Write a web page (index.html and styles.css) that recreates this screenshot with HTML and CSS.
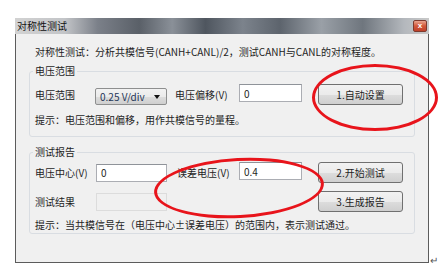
FILE: index.html
```html
<!DOCTYPE html>
<html lang="zh-CN">

<head>
  <meta charset="UTF-8" />
  <meta name="viewport" content="width=device-width, initial-scale=1.0" />
  <title>对称性测试</title>
  <link rel="stylesheet" href="styles.css">
</head>

<body>
  <div class="page">
    <div class="window">
      <div class="titlebar">
        <span class="title">对称性测试</span>
        <span class="close">x</span>
      </div>

      <div class="client">
        <p class="intro">对称性测试：分析共模信号(CANH+CANL)/2，测试CANH与CANL的对称程度。</p>

        <fieldset class="group group-range">
          <legend>电压范围</legend>
          <div class="row">
            <span class="label label-first">电压范围</span>
            <div class="combo">
              <span>0.25 V/div</span>
              <span class="arrow"></span>
            </div>
            <span class="label label-second">电压偏移(V)</span>
            <input class="edit edit-offset" type="text" value="0">
            <button class="btn">1.自动设置</button>
          </div>
          <p class="hint">提示：电压范围和偏移，用作共模信号的量程。</p>
        </fieldset>

        <fieldset class="group group-report">
          <legend>测试报告</legend>
          <div class="row">
            <span class="label label-first">电压中心(V)</span>
            <input class="edit edit-first" type="text" value="0">
            <span class="label label-second">误差电压(V)</span>
            <input class="edit edit-offset" type="text" value="0.4">
            <button class="btn">2.开始测试</button>
          </div>
          <div class="row row-result">
            <span class="label label-first">测试结果</span>
            <input class="edit edit-first" type="text" disabled>
            <span class="spacer"></span>
            <button class="btn">3.生成报告</button>
          </div>
          <p class="hint hint-report">提示：当共模信号在（电压中心±误差电压）的范围内，表示测试通过。</p>
        </fieldset>
      </div>
    </div>

    <span class="return-mark">↵</span>

    <!-- red marks drawn over the dialog -->
    <div class="ring ring-auto"></div>
    <div class="ring ring-error"></div>
  </div>
</body>

</html>
```

FILE: styles.css
```css
body,
div,
fieldset,
p {
  margin: 0;
  padding: 0;
}

body {
  background: #ffffff;
  font-family: "Noto Sans CJK SC", "Liberation Sans", sans-serif;
  font-size: 10px;
  color: #1e1e1e;
}

.page {
  position: relative;
  width: 442px;
  height: 273px;
  overflow: hidden;
  padding-top: 18px;
  box-sizing: border-box;
}

.window {
  margin-left: 15px;
  width: 414px;
  height: 245px;
  border: 1px solid #5c5c5c;
  border-top: 0;
  box-sizing: border-box;
  background: #f0f0f0;
  display: flex;
  flex-direction: column;
}

.titlebar {
  height: 16px;
  margin: 0 -1px;
  display: flex;
  align-items: center;
  justify-content: space-between;
  background: linear-gradient(90deg, #d2d2d2 0%, #c3c5c8 12%, #7b8089 20%, #5a6068 30%, #8a9098 38%, #4f565f 46%, #7c838c 55%, #5d646d 64%, #9aa0a7 74%, #6f767e 84%, #b4b8bd 94%, #c9c9c9 100%);
}

.title {
  padding-left: 2px;
  font-size: 10px;
  line-height: 16px;
  color: #111;
}

.close {
  width: 14px;
  height: 12px;
  margin-right: 2px;
  border: 1px solid #7d3a2e;
  border-radius: 2px;
  box-sizing: border-box;
  background: linear-gradient(#e9a48f, #d2583a 50%, #c0402a);
  color: #fff;
  font-family: "Liberation Sans", sans-serif;
  font-size: 8px;
  font-weight: bold;
  line-height: 10px;
  text-align: center;
}

.client {
  flex: 1;
  padding: 11px 13px 0 13px;
}

.intro {
  margin-left: 6px;
  line-height: 14px;
}

.group {
  margin: 5px 0 0 0;
  padding: 6px 5px 9px 5px;
  border: 1px solid #d9dde2;
  border-radius: 3px;
  min-width: 0;
}

.group legend {
  padding: 0 2px;
  margin-left: -2px;
  line-height: 14px;
}

.group-report {
  margin-top: 8px;
  padding-top: 3px;
  padding-bottom: 1px;
}

.row {
  display: flex;
  align-items: center;
  height: 21px;
}

.row-result {
  margin-top: 8px;
}

.label {
  line-height: 14px;
  white-space: nowrap;
}

.label-first {
  width: 60px;
}

.label-second {
  width: 64px;
  margin-left: 8px;
}

.group-report .label-second {
  margin-left: 10px;
  width: 62px;
}

.combo {
  width: 72px;
  height: 17px;
  margin-top: 4px;
  display: flex;
  align-items: center;
  justify-content: space-between;
  padding: 0 6px 0 4px;
  border: 1px solid #8e8f8f;
  border-radius: 2px;
  box-sizing: border-box;
  background: linear-gradient(#f2f2f2, #ebebeb 50%, #dddddd 51%, #cfcfcf);
  color: #1f3657;
}

.arrow {
  width: 0;
  height: 0;
  border-left: 3px solid transparent;
  border-right: 3px solid transparent;
  border-top: 4px solid #111;
}

.edit {
  height: 18px;
  margin: 0;
  padding: 0 4px;
  border: 1px solid #abadb3;
  border-top-color: #8f9399;
  box-sizing: border-box;
  background: #fff;
  font-family: inherit;
  font-size: 10px;
  color: #1e1e1e;
  align-self: flex-start;
}

.edit-first {
  width: 71px;
  margin-left: 1px;
  align-self: center;
}

.edit-offset {
  width: 63px;
}

.edit:disabled {
  background: #f0f0f0;
  border-color: #dcdcdc;
}

.spacer {
  width: 135px;
}

.btn {
  width: 85px;
  height: 21px;
  margin-left: 16px;
  padding: 0;
  border: 1px solid #707070;
  border-radius: 3px;
  background: linear-gradient(#f2f2f2, #ebebeb 50%, #dddddd 51%, #cfcfcf);
  font-family: inherit;
  font-size: 10px;
  color: #1e1e1e;
}

.hint {
  margin: 8px 0 0 0;
  line-height: 14px;
}

.hint-report {
  margin-top: 6px;
}

.return-mark {
  position: absolute;
  left: 430px;
  top: 252px;
  font-size: 10px;
  color: #555;
}

.ring {
  position: absolute;
  border: 3px solid #e8141b;
  border-radius: 50%;
  box-sizing: border-box;
}

.ring-auto {
  left: 312px;
  top: 64px;
  width: 126px;
  height: 67px;
}

.ring-error {
  left: 154px;
  top: 158px;
  width: 170px;
  height: 60px;
  transform: rotate(-3deg);
}
```
